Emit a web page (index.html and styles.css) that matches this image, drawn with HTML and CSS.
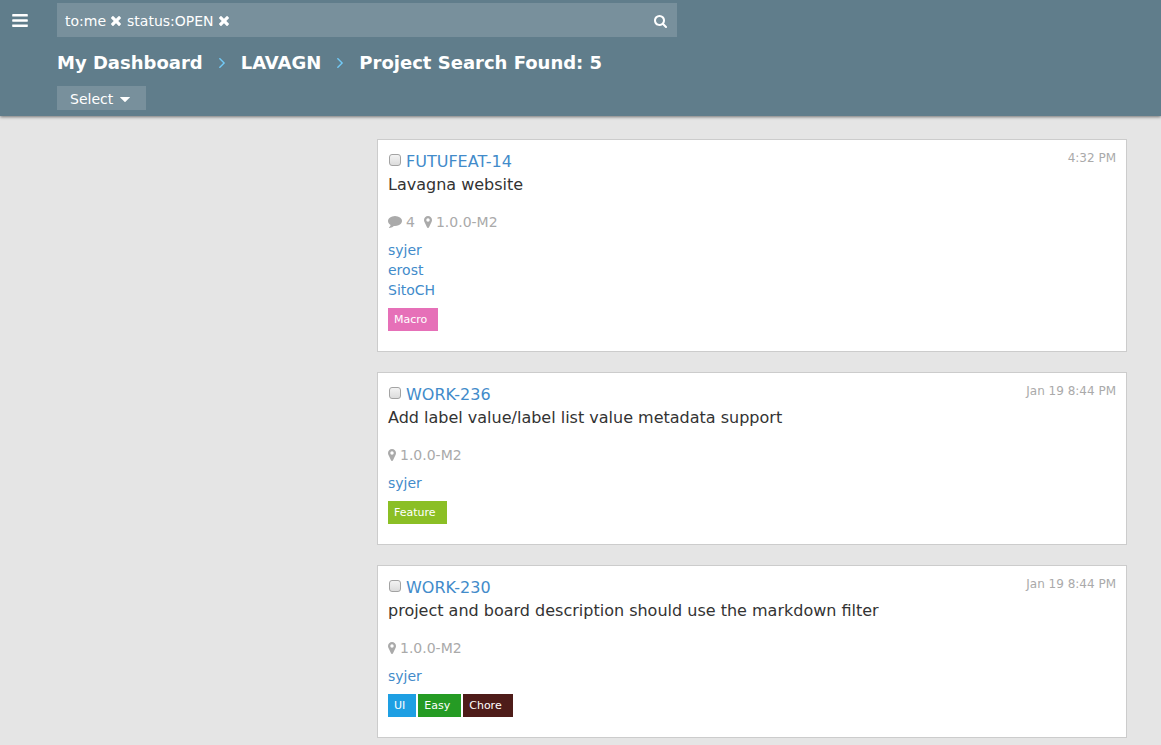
FILE: index.html
```html
<!DOCTYPE html>
<html lang="en">
<head>
<meta charset="utf-8">
<meta name="viewport" content="width=device-width, initial-scale=1">
<title>Project Search</title>
<link rel="stylesheet" href="styles.css">
</head>
<body>
<svg class="sprite" aria-hidden="true">
  <symbol id="bars" viewBox="128 256 1536 1280"><path d="M1664 1344v128q0 26-19 45t-45 19H192q-26 0-45-19t-19-45v-128q0-26 19-45t45-19h1408q26 0 45 19t19 45zm0-512v128q0 26-19 45t-45 19H192q-26 0-45-19t-19-45V832q0-26 19-45t45-19h1408q26 0 45 19t19 45zm0-512v128q0 26-19 45t-45 19H192q-26 0-45-19t-19-45V320q0-26 19-45t45-19h1408q26 0 45 19t19 45z"/></symbol>
  <symbol id="times" viewBox="302 366 1188 1188"><path d="M1490 1322q0 40-28 68l-136 136q-28 28-68 28t-68-28l-294-294-294 294q-28 28-68 28t-68-28l-136-136q-28-28-28-68t28-68l294-294-294-294q-28-28-28-68t28-68l136-136q28-28 68-28t68 28l294 294 294-294q28-28 68-28t68 28l136 136q28 28 28 68t-28 68l-294 294 294 294q28 28 28 68z"/></symbol>
  <symbol id="search" viewBox="64 128 1664 1664"><path d="M1216 832q0-185-131.5-316.5T768 384 451.5 515.5 320 832t131.5 316.5T768 1280t316.5-131.5T1216 832zm512 832q0 52-38 90t-90 38q-54 0-90-38l-343-342q-179 124-399 124-143 0-273.5-55.5t-225-150-150-225T64 832t55.5-273.5 150-225 225-150T768 128t273.5 55.5 225 150 150 225T1472 832q0 220-124 399l343 343q37 37 37 90z"/></symbol>
  <symbol id="angle" viewBox="589 483 582 976"><path d="M1171 971q0 13-10 23l-466 466q-10 10-23 10t-23-10l-50-50q-10-10-10-23t10-23l393-393-393-393q-10-10-10-23t10-23l50-50q10-10 23-10t23 10l466 466q10 10 10 23z"/></symbol>
  <symbol id="caret" viewBox="0 0 10 5"><path d="M.5 0h9q.8 0 .3.6L5.5 4.8q-.5.4-1 0L.2.6Q-.3 0 .5 0z"/></symbol>
  <symbol id="marker" viewBox="384 128 1024 1536"><path fill-rule="evenodd" d="M1116 640a220 220 0 1 0-440 0 220 220 0 1 0 440 0zm292 0q0 109-33 179l-364 774q-16 33-47.5 52t-67.5 19-67.5-19-46.5-52l-365-774q-33-70-33-179 0-212 150-362t362-150 362 150 150 362z"/></symbol>
  <symbol id="comment" viewBox="0 256 1792 1536"><path d="M1792 896q0 174-120 321.5t-326 233-450 85.5q-70 0-145-8-198 175-460 242-49 14-114 22-17 2-30.5-9t-17.5-29v-1q-3-4-.5-12t2-10 4.5-9.5l6-9 7-8.5 8-9q7-8 31-34.5t34.5-38 31-39.5 32.5-51 27-59 26-76q-157-89-247.5-220T0 896q0-130 71-248.5T262 443t286-136.5T896 256t348 50.5T1530 443t191 204.5T1792 896z"/></symbol>
</svg>

<header class="topbar">
  <button class="menu" type="button" aria-label="Menu"><svg class="icon icon-bars"><use href="#bars"/></svg></button>
  <div class="topbar-body">
    <form class="search" role="search">
      <span class="token">to:me<button type="button" aria-label="Remove to:me"><svg class="icon icon-times"><use href="#times"/></svg></button></span>
      <span class="token">status:OPEN<button type="button" aria-label="Remove status:OPEN"><svg class="icon icon-times"><use href="#times"/></svg></button></span>
      <input class="search-input" type="text" aria-label="Search">
      <button type="submit" aria-label="Search"><svg class="icon icon-search"><use href="#search"/></svg></button>
    </form>
    <nav class="breadcrumb" aria-label="Breadcrumb">
      <a href="#">My Dashboard</a>
      <svg class="icon icon-angle"><use href="#angle"/></svg>
      <a href="#">LAVAGN</a>
      <svg class="icon icon-angle"><use href="#angle"/></svg>
      <span>Project Search Found: 5</span>
    </nav>
    <button class="select" type="button" aria-haspopup="true">Select<svg class="icon icon-caret"><use href="#caret"/></svg></button>
  </div>
</header>

<main class="results">
  <article class="card">
    <div class="card-head">
      <input class="check" type="checkbox" aria-label="Select FUTUFEAT-14">
      <a class="card-id" href="#">FUTUFEAT-14</a>
      <time class="date">4:32 PM</time>
    </div>
    <div class="card-title">Lavagna website</div>
    <div class="meta">
      <span class="meta-item"><svg class="icon icon-comment"><use href="#comment"/></svg>4</span>
      <span class="meta-item"><svg class="icon icon-marker"><use href="#marker"/></svg>1.0.0-M2</span>
    </div>
    <div class="users"><a href="#">syjer</a><a href="#">erost</a><a href="#">SitoCH</a></div>
    <div class="labels"><span class="label pink">Macro</span></div>
  </article>

  <article class="card">
    <div class="card-head">
      <input class="check" type="checkbox" aria-label="Select WORK-236">
      <a class="card-id" href="#">WORK-236</a>
      <time class="date">Jan 19 8:44 PM</time>
    </div>
    <div class="card-title">Add label value/label list value metadata support</div>
    <div class="meta">
      <span class="meta-item"><svg class="icon icon-marker"><use href="#marker"/></svg>1.0.0-M2</span>
    </div>
    <div class="users"><a href="#">syjer</a></div>
    <div class="labels"><span class="label lime">Feature</span></div>
  </article>

  <article class="card">
    <div class="card-head">
      <input class="check" type="checkbox" aria-label="Select WORK-230">
      <a class="card-id" href="#">WORK-230</a>
      <time class="date">Jan 19 8:44 PM</time>
    </div>
    <div class="card-title">project and board description should use the markdown filter</div>
    <div class="meta">
      <span class="meta-item"><svg class="icon icon-marker"><use href="#marker"/></svg>1.0.0-M2</span>
    </div>
    <div class="users"><a href="#">syjer</a></div>
    <div class="labels"><span class="label blue">UI</span><span class="label green">Easy</span><span class="label maroon">Chore</span></div>
  </article>
</main>
</body>
</html>
```

FILE: styles.css
```css
* { box-sizing: border-box; }

body {
  margin: 0;
  background: #e5e5e5;
  color: #333;
  font: 14px/20px "DejaVu Sans", sans-serif;
}

a { color: #428bca; text-decoration: none; }

button {
  display: inline-flex;
  align-items: center;
  margin: 0;
  padding: 0;
  border: 0;
  background: none;
  color: inherit;
  font: inherit;
  cursor: pointer;
}

.sprite { display: none; }
.icon { display: block; flex: none; fill: currentColor; }
.icon-bars { width: 16px; height: 13px; }
.icon-times { width: 10px; height: 10px; }
.icon-search { width: 13px; height: 13px; }
.icon-angle { width: 6px; height: 10px; color: #72c9f5; }
.icon-caret { width: 10px; height: 5px; }
.icon-marker { width: 8px; height: 12px; }
.icon-comment { width: 14px; height: 12px; }

.topbar {
  display: grid;
  grid-template-columns: 57px 1fr;
  align-items: start;
  padding: 3px 0 6px;
  background: #607d8b;
  color: #fff;
  box-shadow: 0 1px 3px rgba(0, 0, 0, 0.5);
}

.menu { height: 34px; padding-left: 12px; }

.search {
  display: flex;
  align-items: center;
  gap: 6px;
  max-width: 620px;
  height: 34px;
  padding: 2px 10px 0 8px;
  background: #78909c;
}

.token { display: flex; align-items: center; gap: 5px; }

.search-input {
  flex: 1;
  min-width: 0;
  padding: 0;
  border: 0;
  outline: 0;
  background: none;
  color: inherit;
  font: inherit;
}

.breadcrumb {
  display: flex;
  align-items: center;
  gap: 16px;
  margin: 14px 0 11px;
  font-size: 18px;
  font-weight: bold;
  line-height: 24px;
}

.breadcrumb a { color: inherit; }

.select {
  gap: 7px;
  height: 24px;
  padding: 2px 16px 0 13px;
  background: #78909c;
}

.results {
  display: grid;
  gap: 20px;
  margin-left: 320px;
  padding: 23px 34px 23px 57px;
}

.card {
  padding: 10px 10px 20px;
  border: 1px solid #ccc;
  background: #fff;
}

.card-head { display: flex; align-items: center; font-size: 16px; line-height: 23px; }
.card-title { font-size: 16px; line-height: 23px; }

.check {
  appearance: none;
  width: 12px;
  height: 12px;
  margin: 0 5px 4px 1px;
  border: 1px solid #a3a3a3;
  border-radius: 3px;
  background: linear-gradient(#f3f3f3, #dcdcdc);
}

.check:checked { background: #428bca; }

.date {
  align-self: flex-start;
  margin-left: auto;
  color: #aaa;
  font-size: 12px;
  line-height: 16px;
}

.meta { display: flex; gap: 9px; margin-top: 16px; color: #aaa; }
.meta-item { display: flex; align-items: center; gap: 4px; }

.users { display: flex; flex-direction: column; align-items: flex-start; margin-top: 8px; }

.labels { display: flex; gap: 2px; margin-top: 8px; }

.label {
  padding: 0 11px 0 6px;
  color: #fff;
  font-size: 11px;
  line-height: 23px;
}

.pink { background: #e670b8; }
.lime { background: #8bbf25; }
.blue { background: #1e9fe3; }
.green { background: #259b24; }
.maroon { background: #4e1c19; }
```
